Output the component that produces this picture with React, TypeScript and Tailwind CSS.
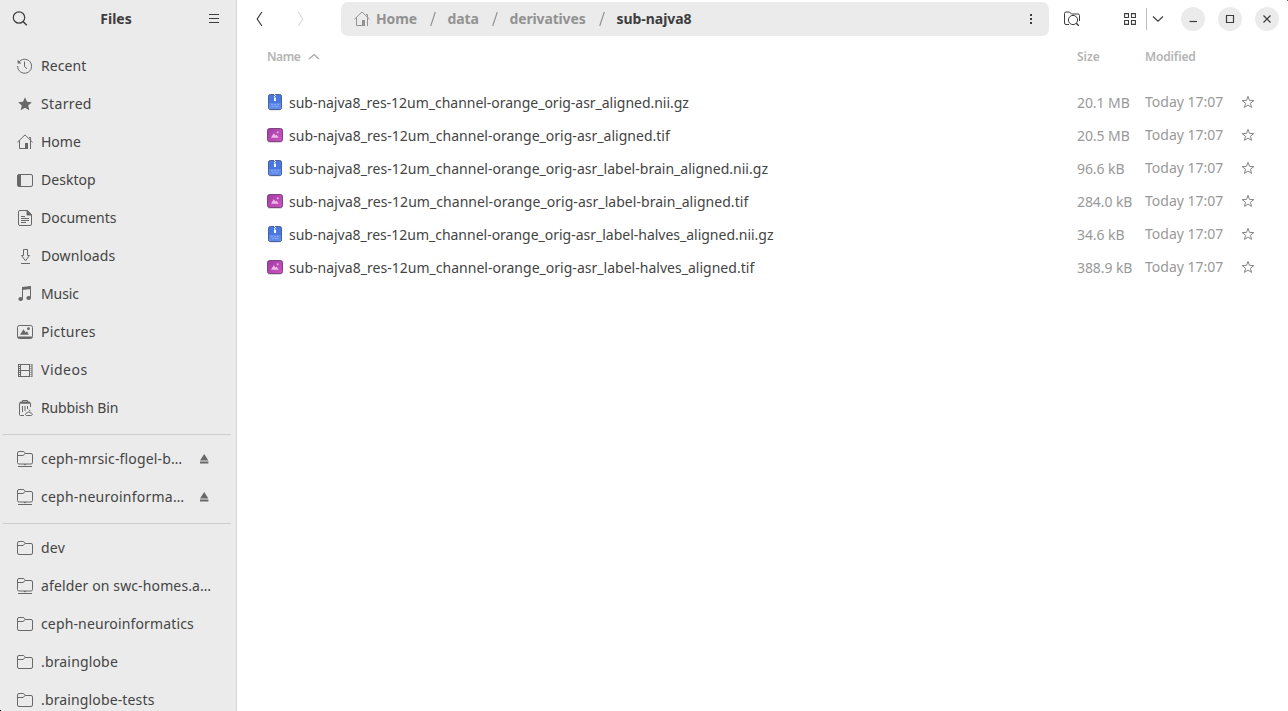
import type { ReactNode } from 'react';

type IconProps = { className?: string };

function Svg({ children, className = '' }: { children: ReactNode; className?: string }) {
  return (
    <svg viewBox="0 0 16 16" width="16" height="16" fill="none" stroke="currentColor" strokeWidth="1" className={`shrink-0 ${className}`}>
      {children}
    </svg>
  );
}

const RecentIcon = () => (
  <Svg>
    <path d="M1.6 4.6A7 7 0 1 1 .6 8" />
    <path d="M.6 1.8v3.7h3.8z" fill="currentColor" stroke="none" />
    <path d="M7.5 3.5v5l2.5 2.3" />
  </Svg>
);
const StarFilledIcon = () => (
  <Svg>
    <path d="M8 1.3l2 4.5 4.9.5-3.7 3.2 1.1 4.8L8 11.8l-4.3 2.5 1.1-4.8L1.1 6.3 6 5.8z" fill="currentColor" stroke="none" />
  </Svg>
);
const HomeIcon = ({ className }: IconProps) => (
  <Svg className={className}>
    <path d="M.4 8.3L8 .9l7.6 7.4M2.5 6.5v8h6M13.5 6.5v8.500M12 3.500h1.500v2.500" />
    <path d="M8 9h3v6H8z" fill="currentColor" stroke="none" />
  </Svg>
);
const DesktopIcon = () => (
  <Svg>
    <rect x=".5" y="2.5" width="15" height="12" rx="1.5" />
    <path d="M1 3h3v11H1z" fill="currentColor" stroke="none" />
  </Svg>
);
const DocumentIcon = () => (
  <Svg>
    <path d="M10.5.5H3A1.5 1.5 0 0 0 1.5 2v12A1.5 1.5 0 0 0 3 15.5h10a1.5 1.5 0 0 0 1.5-1.5V4.5z" />
    <path d="M10 .5v4.5h4.5z" fill="currentColor" />
    <path d="M4 6.5h4M4 8.5h8M4 10.5h8M4 12.500h5" />
  </Svg>
);
const DownloadIcon = () => (
  <Svg>
    <path d="M6.5 1.5h4v6h2l-4 5.300-4-5.300h2zM4 15.500h9" />
  </Svg>
);
const MusicIcon = () => (
  <Svg>
    <path d="M5.5 12.500V2.300l8-1.300v10.500" />
    <path d="M5 .9L14 0v3L5 4z" fill="currentColor" stroke="none" />
    <ellipse cx="3.700" cy="13" rx="2.300" ry="2" fill="currentColor" stroke="none" />
    <ellipse cx="11.700" cy="12" rx="2.300" ry="2" fill="currentColor" stroke="none" />
  </Svg>
);
const PictureIcon = () => (
  <Svg>
    <rect x=".5" y="1.500" width="15" height="13" rx="1.800" />
    <path d="M1 12.500h14v1.500H1zM3 10.800l3.500-5.600 2.300 3.600 1.200-1.800 1.800 3.800z" fill="currentColor" stroke="none" />
    <circle cx="11.500" cy="4.700" r="1.400" fill="currentColor" stroke="none" />
  </Svg>
);
const VideoIcon = () => (
  <Svg>
    <path d="M3.500 2v13M12.500 2v13M3.500 2.500h9M3.500 8.500h9M3.500 14.500h9" />
    <path d="M1.500 2v13M15 2v13" />
    <path d="M2.500 2v13M14 2v13" strokeDasharray="1 1" />
  </Svg>
);
const TrashIcon = () => (
  <Svg>
    <path d="M5.500 2V.500h5V2" />
    <path d="M3.500 1.500h9l2 2.300H1.500z" fill="currentColor" stroke="none" />
    <path d="M2.500 4v10.500a1 1 0 0 0 1 1H7M13.500 4v3M5.500 6v6M8 6v5M10.500 6v3" />
    <path d="M10 15.500c-1 0-1.500-.5-1.500-1.200s.6-1.300 1.400-1.300c.4-1.300 2.600-1.500 3 0h.6c1 0 1.800.4 1.800 1.200s-.6 1.300-1.500 1.300zM12 9.500l1.200 2" />
  </Svg>
);
const FolderIcon = () => (
  <Svg>
    <path d="M.5 13V3A1.500 1.500 0 0 1 2 1.500h4.200a1.500 1.500 0 0 1 1.300.8l.7 1.200H14A1.500 1.500 0 0 1 15.500 5v8a1.500 1.500 0 0 1-1.500 1.500H2A1.500 1.500 0 0 1 .5 13zM.5 5.500H6l2.200-2" />
  </Svg>
);
const NetFolderIcon = () => (
  <Svg>
    <path d="M.5 11.500V2A1.500 1.500 0 0 1 2 .5h4.200a1.500 1.500 0 0 1 1.300.8l.7 1.200H14A1.500 1.500 0 0 1 15.500 4v7.500a1.500 1.500 0 0 1-1.500 1.500H2A1.500 1.500 0 0 1 .5 11.500zM.5 4.500H6l2.200-2M1 15.500h14" />
    <path d="M6.500 13h3L8 14.600z" fill="currentColor" stroke="none" />
  </Svg>
);

const EjectIcon = () => (
  <svg width="9" height="10" viewBox="0 0 9 10" fill="currentColor" className="shrink-0">
    <path d="M4.200 0L8.400 6.500H0zM0 7.500h8.400v2H0z" />
  </svg>
);

const StarIcon = () => (
  <svg width="14" height="14" viewBox="0 0 14 14" fill="none" stroke="#858585" strokeWidth="1" className="mb-[2px] shrink-0">
    <path d="M7 1.400l1.500 4 4.300.2-3.400 2.700 1.200 4.100L7 10.100l-3.600 2.300 1.200-4.100L1.200 5.600l4.300-.2z" />
  </svg>
);

const ArchiveIcon = () => (
  <svg width="16" height="18" viewBox="0 0 16 18" className="mb-[2px] shrink-0">
    <rect x="1.500" y="2" width="13" height="15.500" rx="2" fill="#000" opacity=".18" />
    <rect x="1.500" y="1.500" width="13" height="15" rx="1.800" fill="#4a78e2" stroke="#4c5f96" />
    <rect x="2" y="10" width="12" height="6" fill="#5f8bea" />
    <path d="M7 1h1v1H7zM8 2h1v1H8zM7 3h1v1H7zM7 4.500h2v3.500H7z" fill="#fff" />
    <path d="M4 11.500h2M7 11.500h2M10 11.500h2M5 13.500h2M8 13.500h3" stroke="#86a8f2" />
  </svg>
);

const ImageIcon = () => (
  <svg width="16" height="18" viewBox="0 0 16 18" className="mb-[2px] shrink-0">
    <defs>
      <linearGradient id="imageFill" x1="0" y1="0" x2="1" y2="1">
        <stop offset="0" stopColor="#a03ca8" />
        <stop offset="1" stopColor="#cf55bd" />
      </linearGradient>
    </defs>
    <rect x=".5" y="3" width="15" height="14" rx="2" fill="#000" opacity=".15" />
    <rect x=".5" y="2.500" width="15" height="13" rx="2" fill="url(#imageFill)" stroke="#7c4580" />
    <path d="M4 11.800l2.800-4.600 1.700 2.500 1-1.200 2.200 3.300z" fill="#edbdea" />
    <circle cx="10.700" cy="6.300" r="1" fill="#eab0e8" />
  </svg>
);

type Place = { label: string; icon: ReactNode; track: string; eject?: boolean };

const places: Place[] = [
  { label: 'Recent', icon: <RecentIcon />, track: 'tracking-[0.1px]' },
  { label: 'Starred', icon: <StarFilledIcon />, track: 'tracking-[0.35px]' },
  { label: 'Home', icon: <HomeIcon />, track: 'tracking-normal' },
  { label: 'Desktop', icon: <DesktopIcon />, track: 'tracking-[0.05px]' },
  { label: 'Documents', icon: <DocumentIcon />, track: 'tracking-normal' },
  { label: 'Downloads', icon: <DownloadIcon />, track: 'tracking-[0.1px]' },
  { label: 'Music', icon: <MusicIcon />, track: 'tracking-[-0.1px]' },
  { label: 'Pictures', icon: <PictureIcon />, track: 'tracking-[0.25px]' },
  { label: 'Videos', icon: <VideoIcon />, track: 'tracking-[0.5px]' },
  { label: 'Rubbish Bin', icon: <TrashIcon />, track: 'tracking-[-0.12px]' },
];
const mounts: Place[] = [
  { label: 'ceph-mrsic-flogel-b…', icon: <NetFolderIcon />, track: 'tracking-[0.16px]', eject: true },
  { label: 'ceph-neuroinforma…', icon: <NetFolderIcon />, track: 'tracking-[0.24px]', eject: true },
];
const bookmarks: Place[] = [
  { label: 'dev', icon: <FolderIcon />, track: 'tracking-[0.2px]' },
  { label: 'afelder on swc-homes.a…', icon: <NetFolderIcon />, track: 'tracking-[0.13px]' },
  { label: 'ceph-neuroinformatics', icon: <FolderIcon />, track: 'tracking-[0.14px]' },
  { label: '.brainglobe', icon: <FolderIcon />, track: 'tracking-[0.16px]' },
  { label: '.brainglobe-tests', icon: <FolderIcon />, track: 'tracking-[0.14px]' },
];

const files = [
  { name: 'sub-najva8_res-12um_channel-orange_orig-asr_aligned.nii.gz', size: '20.1 MB', archive: true, track: 'tracking-[-0.02px]' },
  { name: 'sub-najva8_res-12um_channel-orange_orig-asr_aligned.tif', size: '20.5 MB', archive: false, track: 'tracking-[0.02px]' },
  { name: 'sub-najva8_res-12um_channel-orange_orig-asr_label-brain_aligned.nii.gz', size: '96.6 kB', archive: true, track: 'tracking-[0.02px]' },
  { name: 'sub-najva8_res-12um_channel-orange_orig-asr_label-brain_aligned.tif', size: '284.0 kB', archive: false, track: 'tracking-[0.045px]' },
  { name: 'sub-najva8_res-12um_channel-orange_orig-asr_label-halves_aligned.nii.gz', size: '34.6 kB', archive: true, track: 'tracking-[-0.01px]' },
  { name: 'sub-najva8_res-12um_channel-orange_orig-asr_label-halves_aligned.tif', size: '388.9 kB', archive: false, track: 'tracking-[0.02px]' },
];

function PlaceRow({ place }: { place: Place }) {
  return (
    <li className="flex h-[38px] shrink-0 items-center pl-[17px] pr-[27px] text-[#686868]">
      {place.icon}
      <span className={`ml-2 flex-1 whitespace-nowrap text-[#444444] ${place.track}`}>{place.label}</span>
      {place.eject && <EjectIcon />}
    </li>
  );
}

function Sidebar() {
  return (
    <aside className="flex w-[237px] shrink-0 flex-col overflow-hidden border-r border-[#d6d6d6] bg-[#ebebeb]">
      <header className="flex h-[38px] shrink-0 items-center justify-between pl-3 pr-4 text-[#3d3d3d]">
        <Svg>
          <circle cx="7" cy="6.500" r="5.700" strokeWidth="1.200" />
          <path d="M11 10.500l3.800 3.800" strokeWidth="1.500" />
        </Svg>
        <h1 className="-ml-[4px] text-[14px] font-bold">Files</h1>
        <svg width="12" height="12" viewBox="0 0 12 12" stroke="currentColor" strokeWidth="1">
          <path d="M1 1.500h10M1 5.500h10M1 9.500h10" />
        </svg>
      </header>
      <ul className="mt-[9px] flex flex-col">{places.map((p) => <PlaceRow key={p.label} place={p} />)}</ul>
      <hr className="ml-[3px] mr-[5px] mt-[7px] mb-[5px] h-px shrink-0 border-0 bg-[#cdcdcd]" />
      <ul className="flex flex-col">{mounts.map((p) => <PlaceRow key={p.label} place={p} />)}</ul>
      <hr className="ml-[3px] mr-[5px] mt-[7px] mb-[5px] h-px shrink-0 border-0 bg-[#cdcdcd]" />
      <ul className="flex flex-col">{bookmarks.map((p) => <PlaceRow key={p.label} place={p} />)}</ul>
    </aside>
  );
}

const Slash = () => (
  <svg width="6" height="16" viewBox="0 0 6 16" stroke="#8f8f8f" strokeWidth="1.100" className="shrink-0">
    <path d="M5.300 1L.700 15" />
  </svg>
);

function Toolbar() {
  return (
    <header className="flex h-[38px] shrink-0 items-center text-[#3d3d3d]">
      <svg width="8" height="16" viewBox="0 0 8 16" fill="none" stroke="currentColor" strokeWidth="1.200" className="ml-[18px]">
        <path d="M6.900 1L2.200 8l4.700 7" />
      </svg>
      <svg width="8" height="16" viewBox="0 0 8 16" fill="none" stroke="#d8d8d8" strokeWidth="1.200" className="ml-[34px]">
        <path d="M1.200 1L5.800 8l-4.600 7" />
      </svg>
      <nav className="ml-9 flex h-[34px] w-[708px] items-center rounded-[7px] bg-[#ebebeb] pl-[13px] pr-[17px] text-[14px] font-bold text-[#929292]">
        <HomeIcon />
        <span className="ml-[6px] w-[53.500px] tracking-[-0.1px]">Home</span>
        <Slash />
        <span className="ml-[12px] w-[44px] tracking-[-0.1px]">data</span>
        <Slash />
        <span className="ml-[12px] w-[89px] tracking-[-0.15px]">derivatives</span>
        <Slash />
        <span className="ml-[12px] flex-1 tracking-[-0.05px] text-[#3d3d3d]">sub-najva8</span>
        <svg width="2" height="10" viewBox="0 0 2 10" fill="#3d3d3d">
          <path d="M0 0h2v2H0zM0 4h2v2H0zM0 8h2v2H0z" />
        </svg>
      </nav>
      <Svg className="ml-[15px]">
        <path d="M5 13.500H2A1.500 1.500 0 0 1 .5 12V2.500A1.500 1.500 0 0 1 2 1h3.500l2 2H14a1.500 1.500 0 0 1 1.500 1.500V10" />
        <circle cx="9" cy="9" r="4.600" />
        <path d="M12.300 12.300l2.500 2.500" strokeWidth="1.300" />
      </Svg>
      <svg width="12" height="12" viewBox="0 0 12 12" fill="none" stroke="currentColor" strokeWidth="1.100" className="ml-[44px]">
        <path d="M.6.6h3.900v3.900H.6zM7.500.6h3.900v3.900H7.500zM.6 7.500h3.900v3.900H.6zM7.500 7.500h3.900v3.900H7.500z" />
      </svg>
      <span className="ml-[10px] h-[22px] w-px bg-[#bdbdbd]" />
      <svg width="12" height="8" viewBox="0 0 12 8" fill="none" stroke="currentColor" strokeWidth="1.200" className="ml-[5px]">
        <path d="M1 1.500l5 4.700 5-4.700" />
      </svg>
      <div className="ml-[17px] flex gap-[13px]">
        {['M4.500 10.500h7.500', 'M4.500 4.500h7v7h-7z', 'M4.500 4.500l7 7M11.500 4.500l-7 7'].map((d) => (
          <button key={d} className="flex size-6 items-center justify-center rounded-full bg-[#ebebeb]">
            <Svg>
              <path d={d} strokeWidth="1.200" />
            </Svg>
          </button>
        ))}
      </div>
    </header>
  );
}

export default function App() {
  return (
    <div className="relative flex h-[711px] w-[1288px] overflow-hidden bg-white font-['Noto_Sans',sans-serif] text-[14px] leading-5">
      <Sidebar />
      <main className="flex flex-1 flex-col">
        <Toolbar />
        <div className="flex h-[38px] shrink-0 items-center pl-[30px] text-[12px] font-semibold text-[#b4b4b4]">
          <span className="flex w-[810px] items-center gap-2">
            <span className="w-[33px] tracking-[-0.4px]">Name</span>
            <svg width="12" height="7" viewBox="0 0 12 7" fill="none" stroke="#a4a4a4" strokeWidth="1.100" className="mb-px">
              <path d="M1 6l5-4.500L11 6" />
            </svg>
          </span>
          <span className="w-[68px]">Size</span>
          <span className="tracking-[-0.15px]">Modified</span>
        </div>
        <ul className="mt-[10px]">
          {files.map((f) => (
            <li key={f.name} className="flex h-[33px] items-center pl-[30px] text-[#999999]">
              {f.archive ? <ArchiveIcon /> : <ImageIcon />}
              <span className={`ml-[6px] w-[788px] whitespace-nowrap text-[#444444] ${f.track}`}>{f.name}</span>
              <span className="w-[68px] tracking-[-0.08px]">{f.size}</span>
              <span className="w-[96px] pb-px">Today 17:07</span>
              <StarIcon />
            </li>
          ))}
        </ul>
      </main>
      <span className="absolute bottom-0 left-0 size-px bg-black" />
      <span className="absolute right-0 top-0 size-px bg-black/60" />
    </div>
  );
}
